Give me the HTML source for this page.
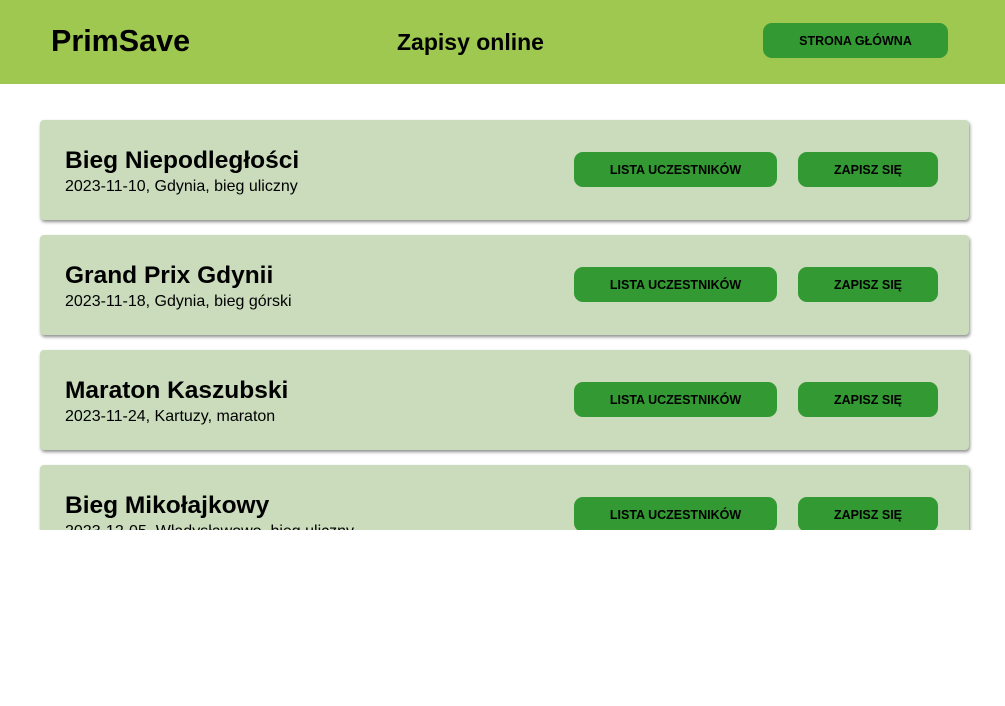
<!DOCTYPE html>
<html><head><meta charset="utf-8"><style>
*{margin:0;padding:0;box-sizing:border-box}
body{width:1005px;height:706px;background:#fff;font-family:"Liberation Sans","DejaVu Sans",sans-serif;overflow:hidden;position:relative}
.hdr{position:absolute;left:0;top:0;width:1005px;height:84px;background:#9ec850}
.logo{position:absolute;left:51px;top:24px;font-size:30.5px;font-weight:bold;color:#000}
.mid{position:absolute;left:397px;top:29px;font-size:23px;font-weight:bold}
.btn{position:absolute;background:#339933;border-radius:9px;color:#000;font-size:12.5px;font-weight:bold;display:flex;align-items:center;justify-content:center;height:35px}
.clip{position:absolute;left:0;top:84px;width:1005px;height:446px;overflow:hidden}
.card{position:absolute;left:40px;width:929px;height:100px;background:#cadcbc;border-radius:4px;box-shadow:1px 2px 3px rgba(0,0,0,.45)}
.t{position:absolute;left:25px;top:27px;font-size:24.5px;font-weight:bold}
.s{position:absolute;left:25px;top:58px;font-size:16px}
</style></head><body>
<div class="hdr"><div class="logo">PrimSave</div><div class="mid">Zapisy online</div>
<div class="btn" style="left:763px;top:23px;width:185px">STRONA GŁÓWNA</div></div>
<div class="clip">
<div class="card" style="top:36px"><div class="t">Bieg Niepodległości</div><div class="s">2023-11-10, Gdynia, bieg uliczny</div>
<div class="btn" style="left:534px;top:32px;width:203px">LISTA UCZESTNIKÓW</div><div class="btn" style="left:758px;top:32px;width:140px">ZAPISZ SIĘ</div></div>
<div class="card" style="top:151px"><div class="t">Grand Prix Gdynii</div><div class="s">2023-11-18, Gdynia, bieg górski</div>
<div class="btn" style="left:534px;top:32px;width:203px">LISTA UCZESTNIKÓW</div><div class="btn" style="left:758px;top:32px;width:140px">ZAPISZ SIĘ</div></div>
<div class="card" style="top:266px"><div class="t">Maraton Kaszubski</div><div class="s">2023-11-24, Kartuzy, maraton</div>
<div class="btn" style="left:534px;top:32px;width:203px">LISTA UCZESTNIKÓW</div><div class="btn" style="left:758px;top:32px;width:140px">ZAPISZ SIĘ</div></div>
<div class="card" style="top:381px"><div class="t">Bieg Mikołajkowy</div><div class="s">2023-12-05, Władysławowo, bieg uliczny</div>
<div class="btn" style="left:534px;top:32px;width:203px">LISTA UCZESTNIKÓW</div><div class="btn" style="left:758px;top:32px;width:140px">ZAPISZ SIĘ</div></div>
</div>
</body></html>
